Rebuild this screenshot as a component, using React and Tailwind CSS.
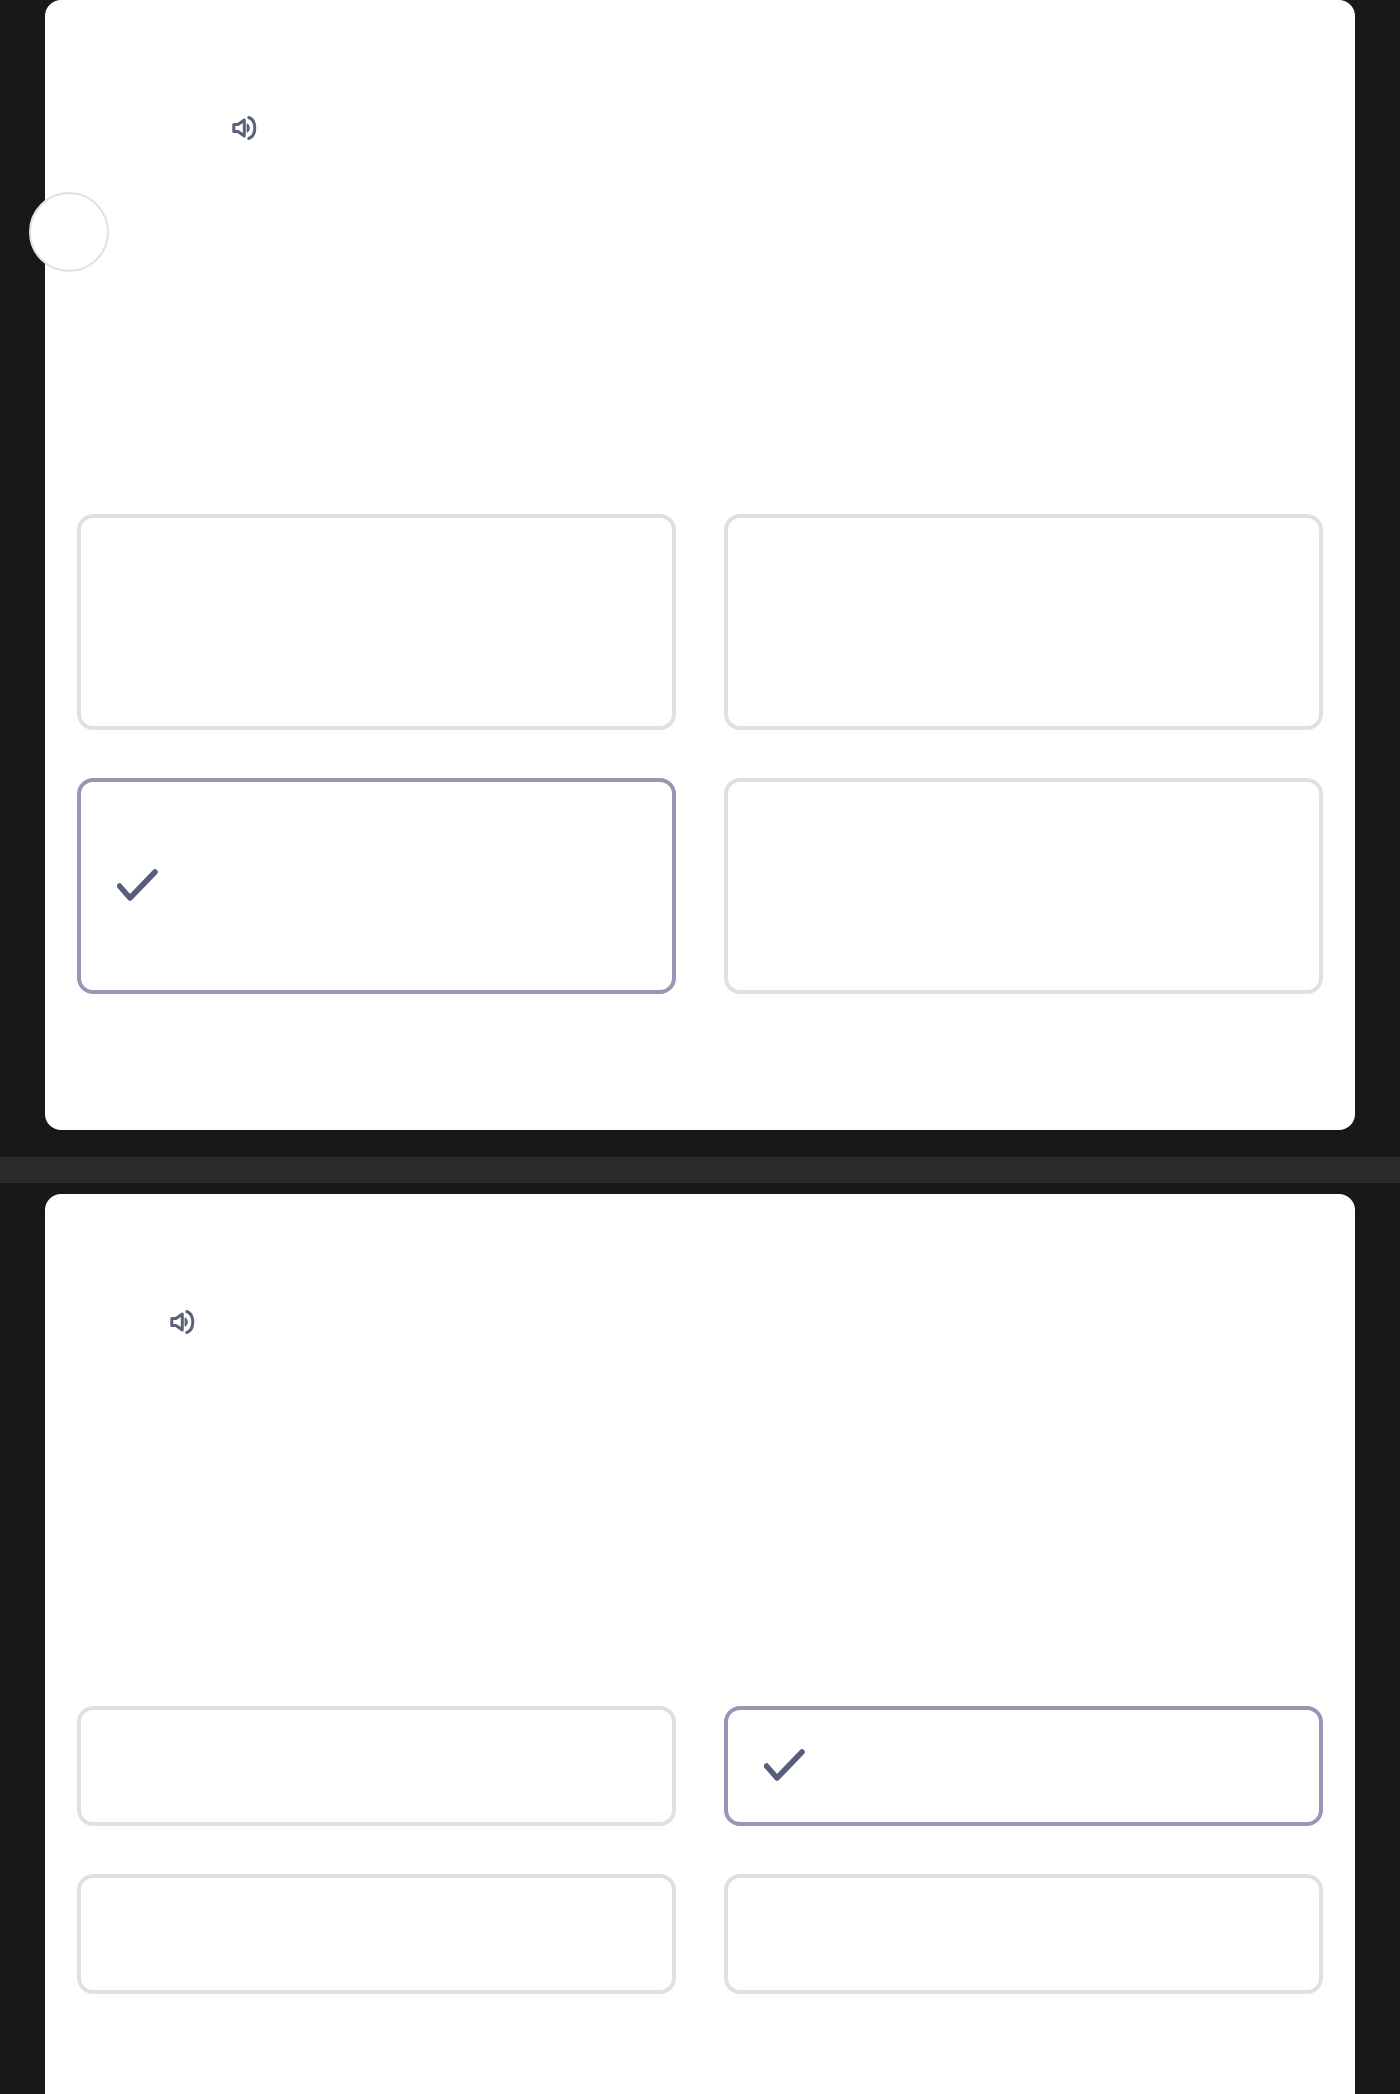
import React from 'react';

function Speaker() {
  return (
    <svg width="26" height="26" viewBox="0 0 26 26" fill="none" className="block text-[#5b6178]">
      <path d="M1.800 9.500h4.200L12.300 5v16l-6.300-4.500H1.800z" stroke="currentColor" strokeWidth="3" strokeLinejoin="round" />
      <path d="M15.500 9.500c1.900 2.300 1.900 4.700 0 7z" fill="currentColor" stroke="currentColor" strokeWidth="1.800" strokeLinejoin="round" />
      <path d="M16.800 2.500c8 3 8 18 0 21" stroke="currentColor" strokeWidth="3" strokeLinecap="round" />
    </svg>
  );
}

function Check() {
  return (
    <svg width="44" height="36" viewBox="0 0 44 36" fill="none" className="block text-[#575d7a]">
      <path d="M2.500 18 L13 30 L38 4" stroke="currentColor" strokeWidth="5.500" strokeLinecap="round" strokeLinejoin="round" />
    </svg>
  );
}

function Option({ selected, tall }) {
  return (
    <div
      className={`flex items-center pl-[36px] rounded-[16px] border-4 bg-white ${tall ? 'h-[216px]' : 'h-[120px]'} ${
        selected ? 'border-[#9597b5]' : 'border-[#dde1e7]'
      }`}
    >
      {selected && <Check />}
    </div>
  );
}

export default function App() {
  return (
    <div className="h-[2094px] overflow-hidden bg-[#181818]">
      {/* Primera pregunta */}
      <section className="relative mx-[45px] h-[1130px] rounded-[16px] bg-white px-[32px]">
        <div className="absolute left-[-16px] top-[192px] h-[80px] w-[80px] rounded-full border-2 border-[#e0e1ea] bg-white" />
        <div className="ml-[155px] pt-[115px]">
          <Speaker />
        </div>
        <div className="mt-[373px] grid grid-cols-2 gap-12">
          <Option tall />
          <Option tall />
          <Option tall selected />
          <Option tall />
        </div>
      </section>

      <div className="mt-[27px] h-[26px] bg-[#2a2c2c]" />

      {/* Segunda pregunta */}
      <section className="mx-[45px] mt-[11px] h-[1000px] rounded-t-[16px] bg-white px-[32px]">
        <div className="ml-[93px] pt-[115px]">
          <Speaker />
        </div>
        <div className="mt-[371px] grid grid-cols-2 gap-12">
          <Option />
          <Option selected />
          <Option />
          <Option />
        </div>
      </section>
    </div>
  );
}
